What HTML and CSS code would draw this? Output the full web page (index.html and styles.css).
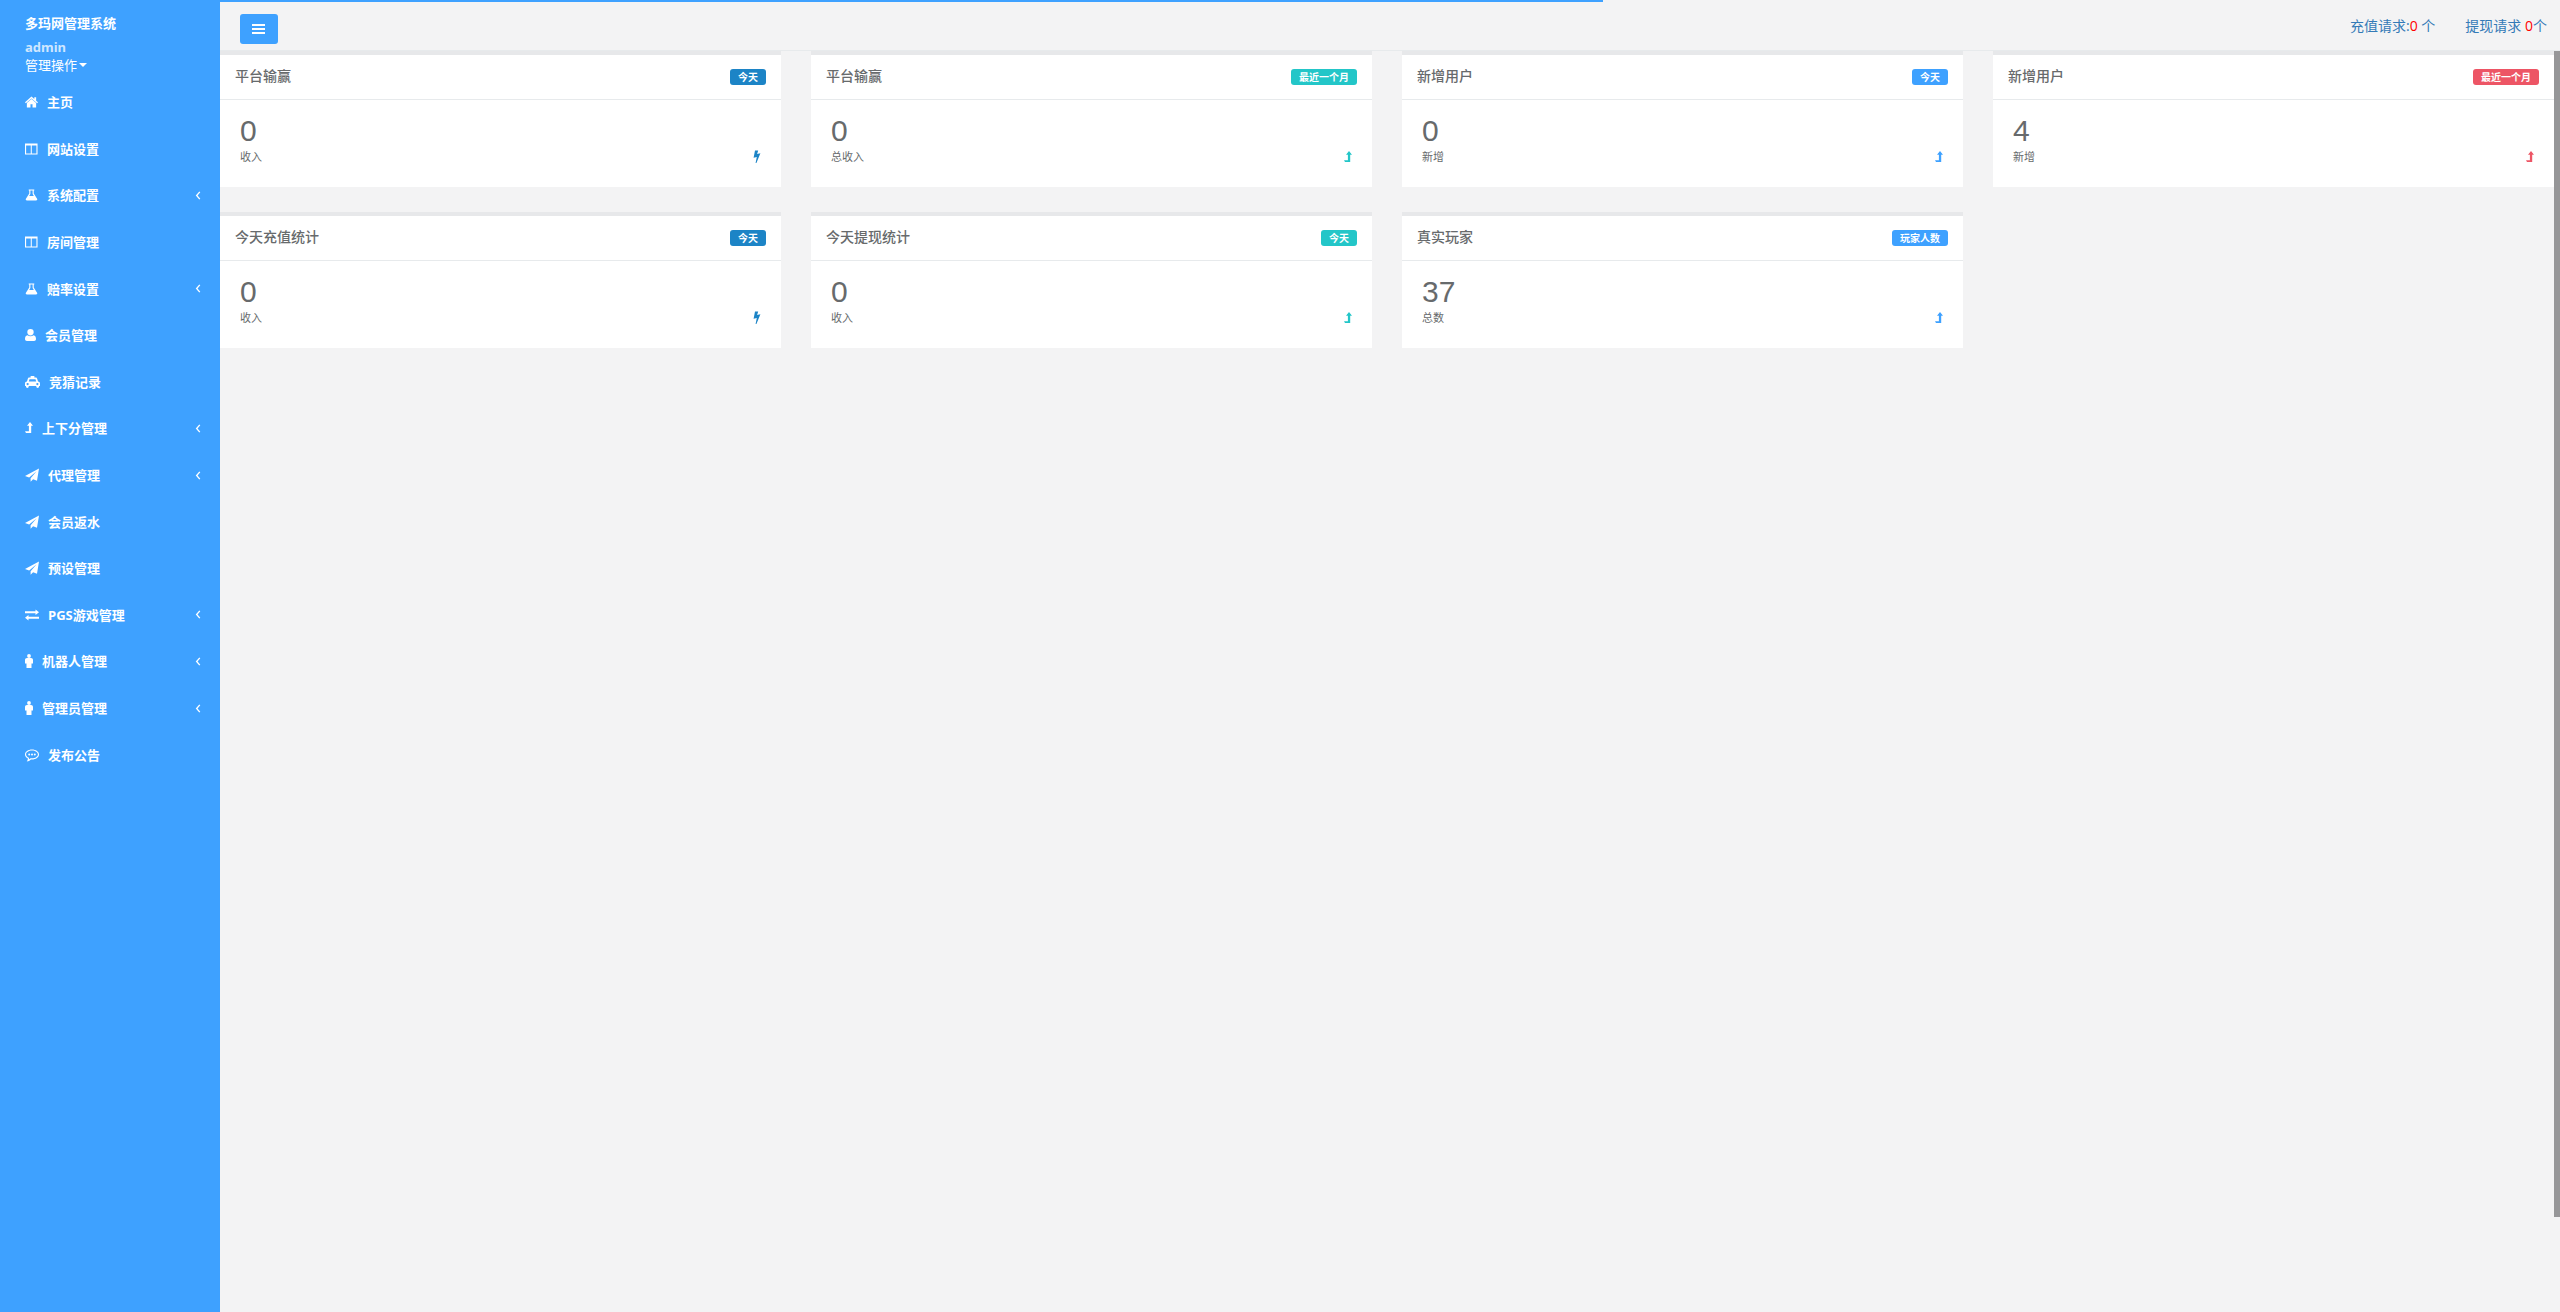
FILE: index.html
```html
<!DOCTYPE html>
<html lang="zh-CN">
<head>
    <meta charset="UTF-8">
    <meta name="viewport" content="width=device-width, initial-scale=1.0">
    <title>多玛网管理系统</title>
    <link rel="stylesheet" href="styles.css">
</head>
<body>

    <!-- Icons -->
    <svg class="icon-defs" aria-hidden="true">
        <symbol id="home" viewBox="0 0 14 14"><path d="M7 1.200 0 7.300l.9 1L7 3.100l6.100 5.200.9-1-2-1.700V2h-2v1.800zM7 3.700 2 8V13h3.900V9.500h2.200V13H12V8z"/></symbol>
        <symbol id="columns" viewBox="0 0 14 14"><path fill-rule="evenodd" d="M0 1h13.500v12H0zM1.200 3.200v8.600h5V3.200zm6.100 0v8.600h5V3.200z"/></symbol>
        <symbol id="flask" viewBox="0 0 14 14"><path fill-rule="evenodd" d="M4 1h6v1.200H9.400v3.300l3.600 5.600c.6 1-.1 1.900-1.100 1.900H2.100c-1 0-1.700-.9-1.100-1.900l3.600-5.600V2.200H4zm1.800 1.200v3.700L4.500 8h5L8.200 5.900V2.200z"/></symbol>
        <symbol id="user" viewBox="0 0 11 14"><path d="M5.500 1a3.200 3.200 0 0 1 3.200 3.200c0 1.800-1.400 3.400-3.200 3.400S2.300 6 2.300 4.200A3.200 3.200 0 0 1 5.500 1zM2.500 7.200c1.700 1.400 4.300 1.400 6 0 1.900.1 2.500 2 2.500 3.900 0 1.200-.8 1.900-1.900 1.900H1.900C.8 13 0 12.300 0 11.100 0 9.200.6 7.300 2.500 7.200z"/></symbol>
        <symbol id="cab" viewBox="0 0 16 14"><path fill-rule="evenodd" d="M6 .5h4v1.700h1.400c.8 0 1.400.5 1.600 1.200l.9 3.100c1.200 0 2.100.9 2.100 2v2.800h-1v.6a1.500 1.500 0 0 1-3 0v-.6H4v.6a1.500 1.500 0 0 1-3 0v-.6H0V8.500c0-1.100.9-2 2.100-2L3 3.400c.2-.7.8-1.200 1.600-1.200H6zM4.800 4l-.7 2.500h7.800L11.200 4zM2.800 8a1.200 1.200 0 1 0 0 2.400 1.200 1.200 0 0 0 0-2.400zm10.400 0a1.200 1.200 0 1 0 0 2.400 1.200 1.200 0 0 0 0-2.400z"/></symbol>
        <symbol id="level-up" viewBox="0 0 8 14"><path d="M5 1 8 4.800H6.200V12H1L0 10.300h3.900V4.800H2z"/></symbol>
        <symbol id="plane" viewBox="0 0 14 14"><path d="M14 .5 12 12.700 8.100 11.200 5.600 13.800v-3.600l6-7L4.200 9.500 0 8z"/></symbol>
        <symbol id="exchange" viewBox="0 0 14 14"><path d="M0 3.300h10.500V1.500L14 4.300l-3.500 2.800V5.300H0zM14 8.700H3.500V6.900L0 9.700l3.500 2.800v-1.800H14z"/></symbol>
        <symbol id="male" viewBox="0 0 8 14"><circle cx="4" cy="2" r="1.900"/><path d="M2 4h4c1.200 0 2 .8 2 2v3.500H6.500V14h-5V9.500H0V6c0-1.200.8-2 2-2z"/></symbol>
        <symbol id="comment" viewBox="0 0 14 14"><path fill-rule="evenodd" d="M7 1.500c3.900 0 7 2.200 7 5s-3.100 5-7 5l-1-.1c-1.200 1.200-2.600 1.800-4.200 2 .7-.9 1.100-1.800 1.100-2.900C1.100 9.600 0 8.200 0 6.500c0-2.800 3.100-5 7-5zm0 1.100c-3.200 0-5.900 1.700-5.900 3.900 0 1.400 1 2.500 2.900 3.300v1.400l1.600-1 1.400.1c3.200 0 5.900-1.700 5.900-3.800S10.200 2.600 7 2.600z"/><circle cx="4.200" cy="6.500" r="1"/><circle cx="7" cy="6.500" r="1"/><circle cx="9.800" cy="6.500" r="1"/></symbol>
        <symbol id="angle" viewBox="0 0 6 10"><path d="M5 1 1.500 5 5 9" fill="none" stroke="currentColor" stroke-width="1.500"/></symbol>
        <symbol id="bars" viewBox="0 0 14 12"><path d="M0 1h13v2H0zm0 4h13v2H0zm0 4h13v2H0z"/></symbol>
        <symbol id="bolt" viewBox="0 0 8 14"><path d="M2 .5h3.200L4.100 3.900l3.300-.7-4 9.800h-.8l1.200-6.100-3.200.8z"/></symbol>
    </svg>

    <nav class="sidebar">
        <div class="profile">
            <strong class="site-name">多玛网管理系统</strong>
            <span class="user-name">admin</span>
            <a href="#" class="user-menu">管理操作<b class="caret"></b></a>
        </div>
        <ul class="menu">
            <li><a href="#"><svg class="w13"><use href="#home"/></svg>主页</a></li>
            <li><a href="#"><svg class="w13"><use href="#columns"/></svg>网站设置</a></li>
            <li><a href="#"><svg class="w13"><use href="#flask"/></svg>系统配置<svg class="arrow"><use href="#angle"/></svg></a></li>
            <li><a href="#"><svg class="w13"><use href="#columns"/></svg>房间管理</a></li>
            <li><a href="#"><svg class="w13"><use href="#flask"/></svg>赔率设置<svg class="arrow"><use href="#angle"/></svg></a></li>
            <li><a href="#"><svg class="w11"><use href="#user"/></svg>会员管理</a></li>
            <li><a href="#"><svg class="w15"><use href="#cab"/></svg>竞猜记录</a></li>
            <li><a href="#"><svg class="w8"><use href="#level-up"/></svg>上下分管理<svg class="arrow"><use href="#angle"/></svg></a></li>
            <li><a href="#"><svg class="w14"><use href="#plane"/></svg>代理管理<svg class="arrow"><use href="#angle"/></svg></a></li>
            <li><a href="#"><svg class="w14"><use href="#plane"/></svg>会员返水</a></li>
            <li><a href="#"><svg class="w14"><use href="#plane"/></svg>预设管理</a></li>
            <li><a href="#"><svg class="w14"><use href="#exchange"/></svg>PGS游戏管理<svg class="arrow"><use href="#angle"/></svg></a></li>
            <li><a href="#"><svg class="w8"><use href="#male"/></svg>机器人管理<svg class="arrow"><use href="#angle"/></svg></a></li>
            <li><a href="#"><svg class="w8"><use href="#male"/></svg>管理员管理<svg class="arrow"><use href="#angle"/></svg></a></li>
            <li><a href="#"><svg class="w14"><use href="#comment"/></svg>发布公告</a></li>
        </ul>
    </nav>

    <div class="page">
        <div class="loading-bar" style="width: 59.1%"></div>
        <header class="topbar">
            <button type="button" class="toggle-btn" aria-label="菜单"><svg><use href="#bars"/></svg></button>
            <div class="requests">
                <a href="#">充值请求:<span class="count">0</span> 个</a>
                <a href="#">提现请求 <span class="count">0</span>个</a>
            </div>
        </header>

        <div class="content">
            <main class="cards">
                <section class="card primary">
                    <div class="card-title"><h5>平台输赢</h5><span class="label">今天</span></div>
                    <div class="card-body">
                        <h1>0</h1>
                        <div class="card-foot"><small>收入</small><svg><use href="#bolt"/></svg></div>
                    </div>
                </section>
                <section class="card info">
                    <div class="card-title"><h5>平台输赢</h5><span class="label">最近一个月</span></div>
                    <div class="card-body">
                        <h1>0</h1>
                        <div class="card-foot"><small>总收入</small><svg><use href="#level-up"/></svg></div>
                    </div>
                </section>
                <section class="card success">
                    <div class="card-title"><h5>新增用户</h5><span class="label">今天</span></div>
                    <div class="card-body">
                        <h1>0</h1>
                        <div class="card-foot"><small>新增</small><svg><use href="#level-up"/></svg></div>
                    </div>
                </section>
                <section class="card danger">
                    <div class="card-title"><h5>新增用户</h5><span class="label">最近一个月</span></div>
                    <div class="card-body">
                        <h1>4</h1>
                        <div class="card-foot"><small>新增</small><svg><use href="#level-up"/></svg></div>
                    </div>
                </section>
                <section class="card primary">
                    <div class="card-title"><h5>今天充值统计</h5><span class="label">今天</span></div>
                    <div class="card-body">
                        <h1>0</h1>
                        <div class="card-foot"><small>收入</small><svg><use href="#bolt"/></svg></div>
                    </div>
                </section>
                <section class="card info">
                    <div class="card-title"><h5>今天提现统计</h5><span class="label">今天</span></div>
                    <div class="card-body">
                        <h1>0</h1>
                        <div class="card-foot"><small>收入</small><svg><use href="#level-up"/></svg></div>
                    </div>
                </section>
                <section class="card success">
                    <div class="card-title"><h5>真实玩家</h5><span class="label">玩家人数</span></div>
                    <div class="card-body">
                        <h1>37</h1>
                        <div class="card-foot"><small>总数</small><svg><use href="#level-up"/></svg></div>
                    </div>
                </section>
            </main>
            <div class="scroll-track"><div class="scroll-thumb"></div></div>
        </div>
    </div>

</body>
</html>
```
FILE: styles.css
```css
* {
    margin: 0;
    padding: 0;
    box-sizing: border-box;
}

body {
    display: flex;
    min-height: 100vh;
    font-family: "Open Sans", "Noto Sans CJK SC", sans-serif;
    font-size: 13px;
    line-height: 18px;
    color: #676a6c;
    background-color: #f3f3f4;
}

a {
    color: #337ab7;
    text-decoration: none;
}

svg {
    fill: currentColor;
}

.icon-defs {
    display: none;
}

/* Sidebar */
.sidebar {
    width: 220px;
    flex-shrink: 0;
    background-color: #3ea1ff;
    color: #fff;
}

.profile {
    display: flex;
    flex-direction: column;
    padding: 14px 25px 5px;
}

.site-name {
    margin-bottom: 6px;
}

.user-name {
    font-family: "Noto Sans", sans-serif;
    font-weight: bold;
    color: #cfe7ff;
}

.user-menu {
    display: flex;
    align-items: center;
    gap: 2px;
    color: #fff;
}

.caret {
    border-top: 4px solid;
    border-left: 4px solid transparent;
    border-right: 4px solid transparent;
}

.menu {
    display: grid;
    grid-auto-rows: 1fr;
    height: 699px;
    list-style: none;
}

.menu a {
    display: flex;
    align-items: center;
    height: 100%;
    padding: 0 19px 0 25px;
    color: #fff;
    font-weight: bold;
}

.menu svg {
    height: 14px;
    margin-right: 9px;
}

.w8 {
    width: 8px;
}

.w11 {
    width: 11px;
}

.w13 {
    width: 13px;
}

.w14 {
    width: 14px;
}

.w15 {
    width: 15px;
}

.menu .arrow {
    width: 6px;
    height: 9px;
    margin-left: auto;
    margin-right: 0;
}

/* Page */
.page {
    position: relative;
    flex: 1;
    display: flex;
    flex-direction: column;
}

.loading-bar {
    position: absolute;
    top: 0;
    left: 0;
    height: 2px;
    background-color: #3ea1ff;
}

.topbar {
    display: flex;
    justify-content: space-between;
    align-items: flex-start;
    height: 51px;
    padding: 14px 13px 0 20px;
    border-bottom: 1px solid #e7eaec;
}

.toggle-btn {
    display: flex;
    align-items: center;
    justify-content: center;
    width: 38px;
    height: 30px;
    border: none;
    border-radius: 3px;
    background-color: #3ea1ff;
    color: #fff;
    cursor: pointer;
}

.toggle-btn svg {
    width: 14px;
    height: 12px;
}

.requests {
    display: flex;
    gap: 30px;
    font-size: 14px;
    line-height: 24px;
}

.count {
    color: #f00;
}

.content {
    flex: 1;
    display: flex;
}

.cards {
    flex: 1;
    display: grid;
    grid-template-columns: repeat(4, 1fr);
    align-content: start;
    gap: 25px 30px;
}

/* Cards */
.card {
    background-color: #fff;
    border-top: 4px solid #e7e8ea;
}

.card-title {
    display: flex;
    justify-content: space-between;
    align-items: flex-start;
    height: 45px;
    padding: 12px 15px 7px;
    border-bottom: 1px solid #e7eaec;
}

.card-title h5 {
    font-size: 14px;
    font-weight: 500;
}

.label {
    margin-top: 2px;
    padding: 0 8px;
    border-radius: 3px;
    font-size: 10px;
    font-weight: bold;
    line-height: 16px;
    color: #fff;
}

.card-body {
    padding: 14px 20px 21px;
}

.card-body h1 {
    font-family: "Liberation Sans", Arial, sans-serif;
    font-size: 30px;
    font-weight: 400;
    line-height: 33px;
}

.card-foot {
    display: flex;
    justify-content: space-between;
    align-items: center;
    height: 19px;
}

.card-foot small {
    font-size: 11px;
}

.card-foot svg {
    width: 8px;
    height: 14px;
}

.primary .label {
    background-color: #1c84c6;
}

.primary svg {
    color: #1c84c6;
}

.info .label {
    background-color: #23c6c8;
}

.info svg {
    color: #23c6c8;
}

.success .label {
    background-color: #3ea1ff;
}

.success svg {
    color: #3ea1ff;
}

.danger .label {
    background-color: #ed5565;
}

.danger svg {
    color: #ed5565;
}

/* Scrollbar */
.scroll-track {
    width: 6px;
}

.scroll-thumb {
    height: 92.5%;
    background-color: #969698;
}
```
